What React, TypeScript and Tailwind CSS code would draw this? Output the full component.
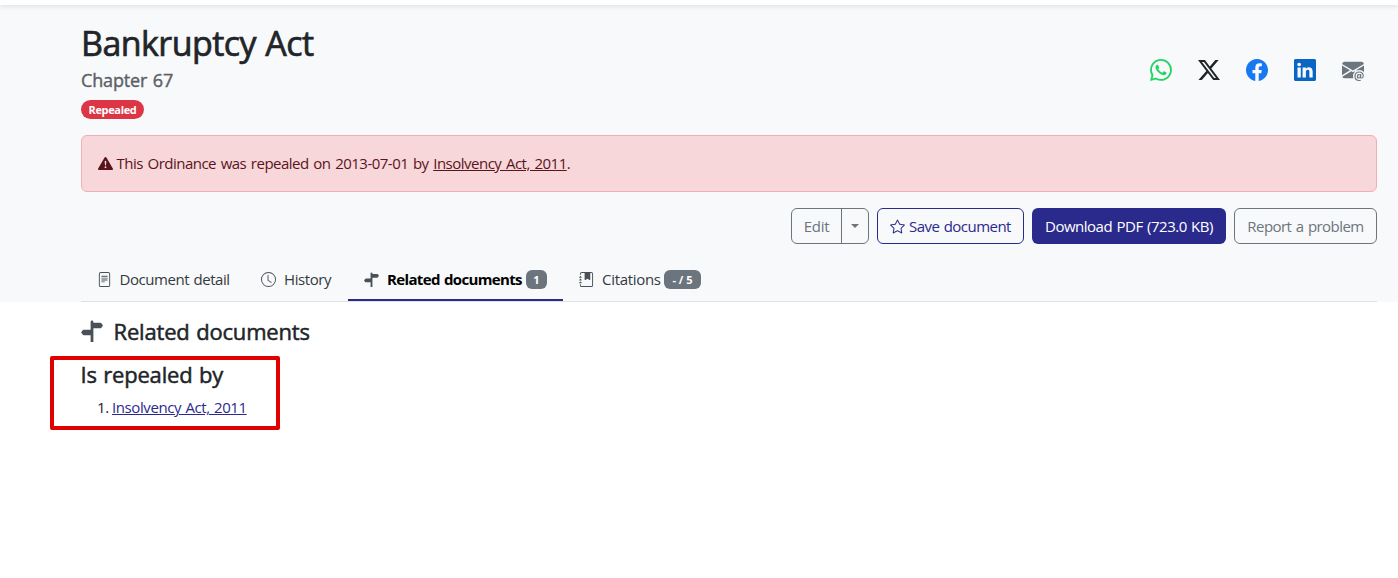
import type { ReactNode } from "react";
import {
  BsClock,
  BsEnvelopeAtFill,
  BsExclamationTriangleFill,
  BsFacebook,
  BsFileText,
  BsJournalBookmarkFill,
  BsLinkedin,
  BsSignpostSplitFill,
  BsStar,
  BsTwitterX,
  BsWhatsapp,
} from "react-icons/bs";

function Tab({ className, icon, label, badge, active }: { className: string; icon: ReactNode; label: ReactNode; badge?: ReactNode; active?: boolean }) {
  return (
    <a
      href="#"
      className={`flex h-[42px] shrink-0 items-center whitespace-nowrap border-b-2 pl-4 ${className} ${
        active ? "border-[#2a2a8c] font-bold text-black" : "border-transparent text-[#343a40]"
      }`}
    >
      <span className="mr-[7px] w-[15px] shrink-0 text-[15px] text-[#495057]">{icon}</span>
      {label}
      {badge}
    </a>
  );
}

export default function App() {
  return (
    <div className="h-[578px] overflow-hidden bg-white font-['Open_Sans',sans-serif] text-[15px] leading-[22px] text-[#212529]">
      <div className="relative h-[5px] bg-white shadow-[0_2px_4px_rgba(0,0,0,0.09)]" />
      <header className="h-[297px] bg-[#f8f9fa] pl-[81px] pr-[21px] pt-[18px]">
        <div className="flex h-[112px] justify-between">
          <div>
            <h1 className="h-[41px] whitespace-nowrap text-[34px] font-medium leading-[41px] tracking-[-0.55px] [-webkit-text-stroke:0.7px] [word-spacing:1px]">Bankruptcy Act</h1>
            <h2 className="mt-[4px] h-[24px] whitespace-nowrap text-[18px] font-medium leading-[24px] tracking-[-0.15px] text-[#5c6166] [-webkit-text-stroke:0.4px] [word-spacing:1px]">Chapter 67</h2>
            <span className="mt-[8px] flex h-[19px] w-[63px] items-center justify-center rounded-full bg-[#dc3545] text-[11px] font-bold tracking-[-0.35px] text-white">
              Repealed
            </span>
          </div>
          <div className="mr-[13.5px] mt-9 flex h-[22px] gap-[26px] text-[22px]">
            <BsWhatsapp className="text-[#25d366]" />
            <BsTwitterX className="text-[#212529]" />
            <BsFacebook className="text-[#1877f2]" />
            <BsLinkedin className="text-[#0a66c2]" />
            <BsEnvelopeAtFill className="text-[#6c757d]" />
          </div>
        </div>
        <div className="flex h-[57px] items-center whitespace-nowrap rounded-md border border-[#f1aeb5] bg-[#f8d7da] px-[15px] pb-[2px] text-[#58151c]">
          <BsExclamationTriangleFill className="ml-[0.5px] mr-1 mt-px" />
          <span className="tracking-[-0.51px] [word-spacing:1.25px]">
            This Ordinance was repealed on 2013-07-01 by <a href="#" className="underline">Insolvency Act, 2011</a>.
          </span>
        </div>
        <div className="mt-4 flex h-9 justify-end gap-2 whitespace-nowrap">
          <div className="flex w-[78px] rounded-md border border-[#6c757d] text-[#6c757d]">
            <button className="w-[50px] border-r border-[#6c757d] tracking-[-0.3px]">Edit</button>
            <button className="flex flex-1 items-center justify-center" aria-label="More">
              <span className="h-0 w-0 border-x-4 border-t-4 border-x-transparent border-t-[#6c757d]" />
            </button>
          </div>
          <button className="flex w-[147px] items-center rounded-md border border-[#2a2a8c] pl-3 text-[#2a2a8c]">
            <BsStar className="mr-1 shrink-0" />
            <span className="tracking-[-0.53px] [word-spacing:1px]">Save document</span>
          </button>
          <button className="w-[194px] rounded-md bg-[#2a2a8c] tracking-[-0.5px] text-white [word-spacing:1px]">Download PDF (723.0 KB)</button>
          <button className="w-[143px] rounded-md border border-[#6c757d] tracking-[-0.55px] text-[#6c757d] [word-spacing:1px]">Report a problem</button>
        </div>
        <nav className="mt-[15px] flex h-[43px] border-b border-[#dee2e6]">
          <Tab className="w-[164px]" icon={<BsFileText className="-ml-[0.5px]" />} label={<span className="ml-[0.5px] tracking-[-0.45px] [word-spacing:1px]">Document detail</span>} />
          <Tab className="w-[103px]" icon={<BsClock />} label={<span className="ml-px tracking-[-0.4px]">History</span>} />
          <Tab
            active
            className="w-[215px]"
            icon={<BsSignpostSplitFill className="-ml-[0.5px]" />}
            label={<span className="ml-px w-[135px] tracking-[-0.65px] [word-spacing:1px]">Related documents</span>}
            badge={<span className="ml-1 flex h-[19px] w-[21px] items-center justify-center rounded-md bg-[#6c757d] pt-px text-[11px] text-white">1</span>}
          />
          <Tab
            className="w-[154px]"
            icon={<BsJournalBookmarkFill />}
            label={<span className="ml-px w-[58px] tracking-[-0.3px]">Citations</span>}
            badge={<span className="ml-1 flex h-[19px] w-[37px] items-center justify-center rounded-md bg-[#6c757d] pt-px text-[11px] font-bold text-white">- / 5</span>}
          />
        </nav>
      </header>
      <main className="pl-[81px] pt-4">
        <h2 className="flex h-[27px] items-center whitespace-nowrap text-[22px] font-medium leading-[27px] tracking-[-0.18px] [-webkit-text-stroke:0.5px] [word-spacing:1px]">
          <BsSignpostSplitFill className="-mt-[2px] mr-[10.5px] text-[#495057] [-webkit-text-stroke:0]" />
          Related documents
        </h2>
        <section className="-ml-[31px] mt-[11px] h-[74px] w-[230px] rounded-[2px] border-4 border-[#e00000] pl-[26.5px] pt-px">
          <h3 className="h-[27px] whitespace-nowrap text-[22px] font-medium leading-[27px] tracking-[-0.2px] [-webkit-text-stroke:0.5px] [word-spacing:1px]">Is repealed by</h3>
          <ol className="mt-[8px] pl-[16.5px]">
            <li className="flex whitespace-nowrap">
              <span className="w-[15px] shrink-0 tracking-[-0.4px]">1.</span>
              <a href="#" className="tracking-[-0.4px] text-[#2a2a8c] underline [word-spacing:0.75px]">Insolvency Act, 2011</a>
            </li>
          </ol>
        </section>
      </main>
    </div>
  );
}
